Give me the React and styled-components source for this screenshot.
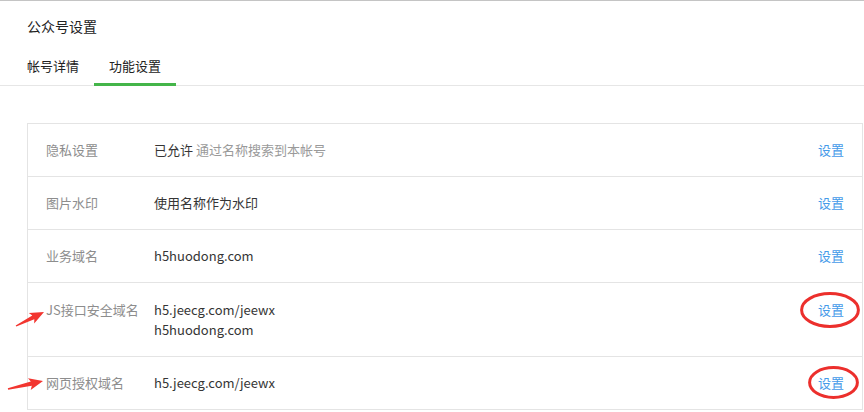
import React from 'react'
import styled, { createGlobalStyle } from 'styled-components'

const rows = [
    { label: '隐私设置', values: [{ main: '已允许', note: '通过名称搜索到本帐号' }] },
    { label: '图片水印', values: [{ main: '使用名称作为水印' }] },
    { label: '业务域名', values: [{ main: 'h5huodong.com' }] },
    {
        label: 'JS接口安全域名',
        values: [{ main: 'h5.jeecg.com/jeewx' }, { main: 'h5huodong.com' }],
        arrow: { tail: [-30, 26], tip: [-2, 12] },
        ring: { left: -18, top: -8, width: 60, height: 36 },
    },
    {
        label: '网页授权域名',
        values: [{ main: 'h5.jeecg.com/jeewx' }],
        arrow: { tail: [-38, 16], tip: [-3, 8] },
        ring: { left: -10, top: -7, width: 51, height: 33 },
    },
]

// tapering red arrow, from a thin tail to a filled head
function arrowPoints(tail, tip) {
    const [x1, y1] = tail
    const [x2, y2] = tip
    const len = Math.hypot(x2 - x1, y2 - y1)
    const ux = (x2 - x1) / len
    const uy = (y2 - y1) / len
    const nx = -uy
    const ny = ux
    const head = 12
    const bx = x2 - ux * head
    const by = y2 - uy * head
    const pt = (x, y, w) => [x + nx * w, y + ny * w]
    const p = [
        pt(x1, y1, 0.7),
        pt(bx, by, 2.2),
        pt(bx - ux * 2, by - uy * 2, 6),
        [x2, y2],
        pt(bx - ux * 2, by - uy * 2, -6),
        pt(bx, by, -2.2),
        pt(x1, y1, -0.7),
    ]
    return p.map(([x, y]) => `${(x + 50).toFixed(1)},${(y + 10).toFixed(1)}`).join(' ')
}

function Arrow({ tail, tip }) {
    return (
        <ArrowSvg width="60" height="50" viewBox="0 0 60 50">
            <polygon points={arrowPoints(tail, tip)} fill="#f2352f" />
        </ArrowSvg>
    )
}

function Ring({ left, top, width, height }) {
    return (
        <RingSvg style={{ left, top }} width={width} height={height} viewBox={`0 0 ${width} ${height}`}>
            <ellipse
                cx={width / 2}
                cy={height / 2}
                rx={width / 2 - 1.6}
                ry={height / 2 - 1.6}
                fill="none"
                stroke="#ec2f2c"
                strokeWidth="3"
            />
        </RingSvg>
    )
}

function App() {
    return (
        <Page>
            <GlobalStyle />
            <Header>
                <Title>公众号设置</Title>
                <Tabs>
                    <Tab>帐号详情</Tab>
                    <Tab active>功能设置</Tab>
                </Tabs>
            </Header>

            <Table>
                {rows.map((row) => (
                    <Row key={row.label} tall={row.values.length > 1}>
                        <Label>
                            {row.arrow && <Arrow {...row.arrow} />}
                            {row.label}
                        </Label>
                        <Values>
                            {row.values.map((v) => (
                                <div key={v.main}>
                                    {v.main}
                                    {v.note && <Note> {v.note}</Note>}
                                </div>
                            ))}
                        </Values>
                        <Action>
                            <Link>
                                设置
                                {row.ring && <Ring {...row.ring} />}
                            </Link>
                        </Action>
                    </Row>
                ))}
            </Table>
        </Page>
    )
}

export default App

const GlobalStyle = createGlobalStyle`
    body {
        margin: 0;
        background: #fff;
        font-family: "Microsoft YaHei", "Noto Sans CJK SC", "Noto Sans", sans-serif;
        color: #353535;
    }
`
const Page = styled.div`
    width: 864px;
    height: 412px;
    border-top: 1px solid #c4c4c4;
    box-sizing: border-box;
    overflow: hidden;
`
const Header = styled.div`
    padding-top: 15px;
`
const Title = styled.div`
    padding-left: 27px;
    font-size: 14px;
    line-height: 20px;
    color: #222;
`
const Tabs = styled.div`
    display: flex;
    padding-left: 27px;
    height: 49px;
    border-bottom: 1px solid #e6e6e6;
`
const Tab = styled.div`
    padding: 20px 15px 7px;
    font-size: 13px;
    line-height: 20px;
    color: #222;
    height: 20px;
    border-bottom: 3px solid ${(p) => (p.active ? '#44b549' : 'transparent')};
    &:first-child {
        padding-left: 0;
    }
`
const Table = styled.div`
    margin: 37px 1px 0 27px;
    border: 1px solid #e4e4e4;
    border-bottom: none;
`
const Row = styled.div`
    display: grid;
    grid-template-columns: 108px 1fr auto;
    padding: ${(p) => (p.tall ? '17px' : '16px')} 18px 16px;
    border-bottom: 1px solid #e4e4e4;
    font-size: 13px;
    line-height: 20px;
`
const Label = styled.div`
    position: relative;
    color: #8d8d8d;
`
const ArrowSvg = styled.svg`
    position: absolute;
    left: -50px;
    top: -10px;
    overflow: visible;
`
const Values = styled.div`
    color: #353535;
`
const Note = styled.span`
    color: #9a9a9a;
`
const Action = styled.div`
    display: flex;
    align-items: flex-start;
`
const Link = styled.span`
    position: relative;
    color: #459ae9;
    cursor: pointer;
`
const RingSvg = styled.svg`
    position: absolute;
    pointer-events: none;
`
